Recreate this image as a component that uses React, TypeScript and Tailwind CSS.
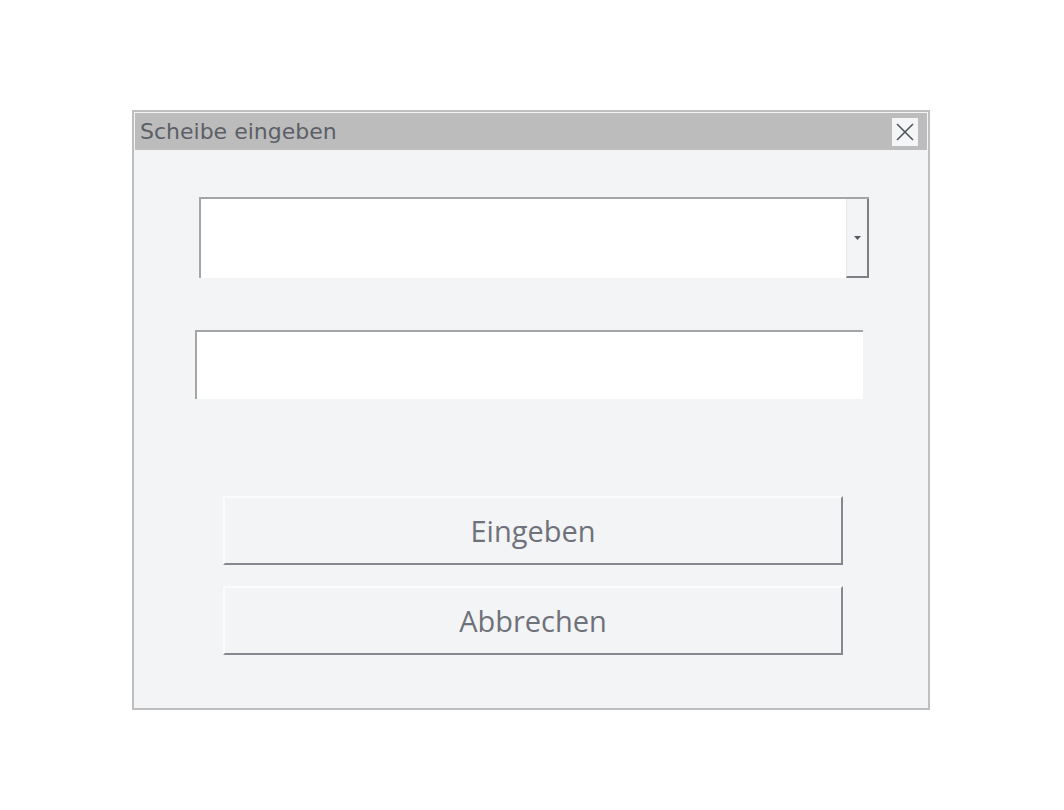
import React from "react";

// ─── Dialog pieces ───────────────────────────────────────────────

function TitleBar({ title }: { title: string }) {
  return (
    <div className="flex h-[37px] items-center justify-between bg-[#bbbcbb] pl-[5px] pr-[9px]">
      <span className="text-[22px] text-[#5c5f67] [font-family:'DejaVu_Sans',sans-serif]">
        {title}
      </span>
      <button
        type="button"
        className="flex h-[28px] w-[26px] items-center justify-center bg-[#f4f5f6]"
      >
        <svg width="20" height="20" viewBox="0 0 20 20">
          <path d="M2 2 L18 18 M18 2 L2 18" stroke="#4f535b" strokeWidth="1.6" />
        </svg>
      </button>
    </div>
  );
}

function ComboBox() {
  return (
    <div className="ml-[64px] mt-[47px] flex h-[81px] w-[670px] border-l-2 border-t-2 border-[#a4a5a7] bg-white">
      <div className="flex-1" />
      <div className="flex w-[23px] items-center justify-center border-b-2 border-l border-r-2 border-b-[#7d7f85] border-l-[#e6e7e9] border-r-[#7d7f85] bg-[#f3f4f6]">
        <svg width="7" height="4" viewBox="0 0 7 4">
          <path d="M0 0 L7 0 L3.5 4 Z" fill="#55585f" />
        </svg>
      </div>
    </div>
  );
}

function TextField() {
  return (
    <div className="ml-[60px] mt-[52px] h-[69px] w-[668px] border-l-2 border-t-2 border-[#a4a5a7] bg-white" />
  );
}

function DialogButton({ label, className = "" }: { label: string; className?: string }) {
  return (
    <button
      type="button"
      className={`ml-[88px] flex h-[69px] w-[620px] items-center justify-center border-2 border-b-[#868890] border-l-[#fbfbfc] border-r-[#868890] border-t-[#fbfbfc] bg-[#f3f4f6] pt-px text-[29px] font-medium text-[#6f727a] [font-family:'Open_Sans',sans-serif] ${className}`}
    >
      {label}
    </button>
  );
}

// ─── App ─────────────────────────────────────────────────────────

export default function App() {
  return (
    <div className="min-h-screen bg-white pl-[132px] pt-[110px]">
      <div className="h-[600px] w-[798px] border-2 border-[#bdbebd] bg-[#f3f4f6] p-px">
        <TitleBar title="Scheibe eingeben" />
        <ComboBox />
        <TextField />
        <DialogButton label="Eingeben" className="mt-[97px]" />
        <DialogButton label="Abbrechen" className="mt-[21px]" />
      </div>
    </div>
  );
}
